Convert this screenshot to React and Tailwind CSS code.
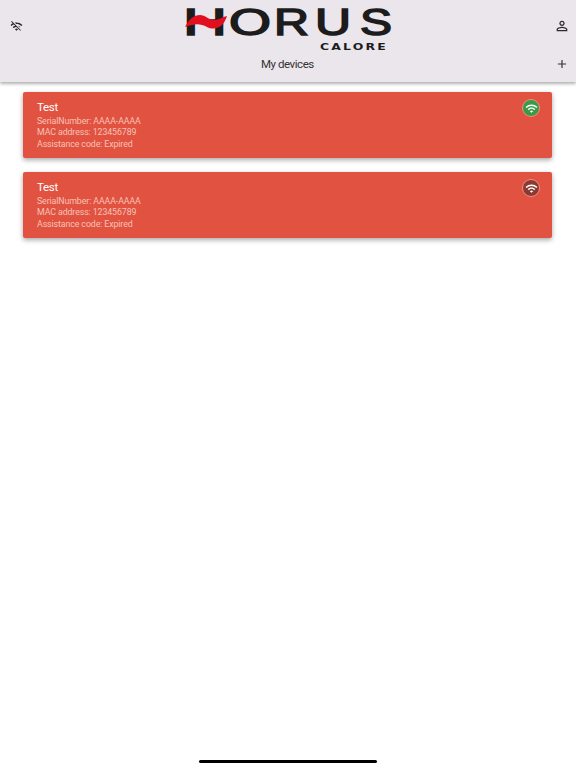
import React from "react";
import { MdWifiOff, MdPersonOutline, MdAdd, MdWifi } from "react-icons/md";

const letters = [
  ["H", -1, 44],
  ["O", 45, 42],
  ["R", 90, 35],
  ["U", 131, 36],
  ["S", 176, 32],
];

function Logo() {
  return (
    <svg width="210" height="54" viewBox="0 0 210 54" className="block">
      {letters.map(([c, x, w]) => (
        <text key={x} x={x} y="35" textLength={w} lengthAdjust="spacingAndGlyphs" fontFamily="Liberation Sans" fontSize="37" fill="#1c1c1c" stroke="#1c1c1c" strokeWidth="1.5">{c}</text>
      ))}
      <path d="M1 27 C5 19 10 15 16 15 C21 15 25 20 30 20 C35 20 38 17 43 16 C41 22 38 26 34 27.5 C30 29 27 29 23 27 C19 25 15 24 11 24.5 C7 25 4 26 1 27 Z" fill="#e2101e" />
      <text x="136" y="50" textLength="68" lengthAdjust="spacingAndGlyphs" letterSpacing="1.5" fontFamily="DejaVu Sans" fontWeight="700" fontSize="8.5" fill="#1c1c1c">CALORE</text>
    </svg>
  );
}

function DeviceCard({ online }) {
  return (
    <div className="flex justify-between h-[66px] rounded-[2px] bg-[#e25240] pl-[14px] pr-[12px] pt-[8px] shadow-[0_2px_5px_rgba(0,0,0,0.35)]">
      <div className="flex flex-col">
        <div className="text-[11.5px] leading-[15px] tracking-[-0.3px] text-white">Test</div>
        <div className="mt-[0.5px] text-[8.8px] leading-[11.5px] tracking-[-0.1px] text-[#f6c2b9]">SerialNumber: AAAA-AAAA</div>
        <div className="text-[8.8px] leading-[11.5px] tracking-[-0.1px] text-[#f6c2b9]">MAC address: 123456789</div>
        <div className="text-[8.8px] leading-[11.5px] tracking-[-0.1px] text-[#f6c2b9]">Assistance code: Expired</div>
      </div>
      <div className={`-mt-[1px] flex h-[18px] w-[18px] items-center justify-center rounded-full border border-[#ee8f80] ${online ? "bg-[#3a9b46]" : "bg-[#8a3a33]"}`}>
        <MdWifi className="text-white" size={13} />
      </div>
    </div>
  );
}

export default function App() {
  return (
    <div className="flex min-h-[768px] flex-col bg-white font-['Roboto','Liberation_Sans',sans-serif]">
      <header className="h-[82px] bg-[#ebe5ec] shadow-[0_2px_3px_rgba(0,0,0,0.3)]">
        <div className="flex h-[54px] items-start justify-between pl-[10px] pr-[6px]">
          <MdWifiOff className="mt-[20px] text-[#2b2b2b]" size={13} />
          <Logo />
          <MdPersonOutline className="mt-[18px] text-[#2b2b2b]" size={16} />
        </div>
        <div className="flex items-center justify-between pl-[261px] pr-[7px] pt-[1px]">
          <span className="text-[11.5px] leading-[18px] tracking-[-0.45px] text-[#333]">My devices</span>
          <MdAdd className="text-[#333]" size={14} />
        </div>
      </header>
      <main className="flex flex-1 flex-col gap-[14px] pl-[23px] pr-[24px] pt-[10px]">
        <DeviceCard online />
        <DeviceCard />
      </main>
      <div className="flex justify-center pb-[5px]">
        <div className="h-[3px] w-[178px] rounded-full bg-black" />
      </div>
    </div>
  );
}
